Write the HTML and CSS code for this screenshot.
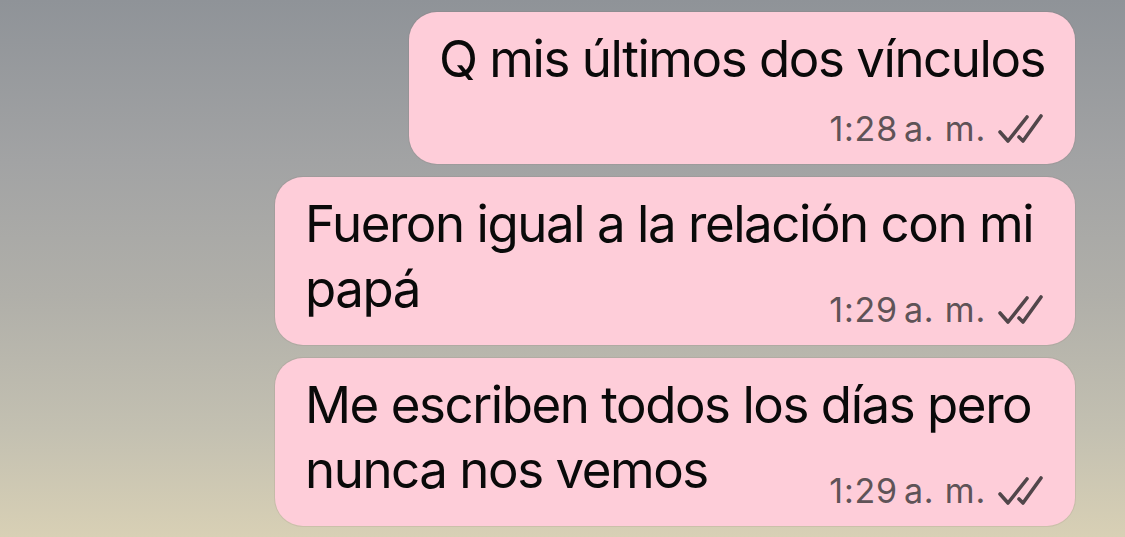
FILE: index.html
```
<html>
<head>
	<link rel="stylesheet" href="styles.css">
</head>

<body>

<div class="chat">
	<div class="bubble short">
		<span class="text">Q mis últimos dos vínculos</span>
		<div class="meta">
			<span class="time">1:28</span><span class="ampm">a. m.</span>
			<svg class="ticks" viewBox="0 0 46 30" width="46" height="30"><path d="M2 18 L10 27 L29 3"/><path d="M21 23 L25 27 L43 2"/></svg>
		</div>
	</div>
	<div class="bubble">
		<span class="text">Fueron igual a la relación con mi papá</span>
		<div class="meta">
			<span class="time">1:29</span><span class="ampm">a. m.</span>
			<svg class="ticks" viewBox="0 0 46 30" width="46" height="30"><path d="M2 18 L10 27 L29 3"/><path d="M21 23 L25 27 L43 2"/></svg>
		</div>
	</div>
	<div class="bubble">
		<span class="text">Me escriben todos los días pero nunca nos vemos</span>
		<div class="meta">
			<span class="time">1:29</span><span class="ampm">a. m.</span>
			<svg class="ticks" viewBox="0 0 46 30" width="46" height="30"><path d="M2 18 L10 27 L29 3"/><path d="M21 23 L25 27 L43 2"/></svg>
		</div>
	</div>
</div>

</body>
</html>
```

FILE: styles.css
```
body{
	margin: 0;
	height: 537px;
	overflow: hidden;
	background: linear-gradient(180deg, #8f9398 0%, #a2a3a4 30%, #b0afa9 55%, #c3c0b1 80%, #d8d0b5 100%);
	font-family: "Inter", "Noto Sans", sans-serif;
}
.chat{
	display: flex;
	flex-direction: column;
	align-items: flex-end;
	gap: 13px;
	padding: 12px 50px 0 0;
}
.bubble{
	max-width: 800px;
	box-sizing: border-box;
	background: #fecdd9;
	border-radius: 28px;
	padding: 14px 30px 15px 30px;
	box-shadow: 0 0 0 1px rgba(120, 90, 90, 0.12);
	color: #0a0a0a;
	font-size: 51px;
	line-height: 65px;
	letter-spacing: -1.45px;
}
.bubble .meta{
	float: right;
	margin-top: 34px;
	margin-left: 20px;
	display: flex;
	align-items: center;
	height: 40px;
	font-size: 34px;
	line-height: 40px;
	letter-spacing: 0.8px;
	color: #5f5357;
}
.bubble.short .meta{
	float: none;
	margin-top: 18px;
	justify-content: flex-end;
}
.meta .time{
	margin-right: 6px;
}
.meta .ticks{
	margin-left: 12px;
	margin-right: 1px;
	fill: none;
	stroke: #51464a;
	stroke-width: 3.6;
	stroke-linecap: round;
	stroke-linejoin: round;
}
```
